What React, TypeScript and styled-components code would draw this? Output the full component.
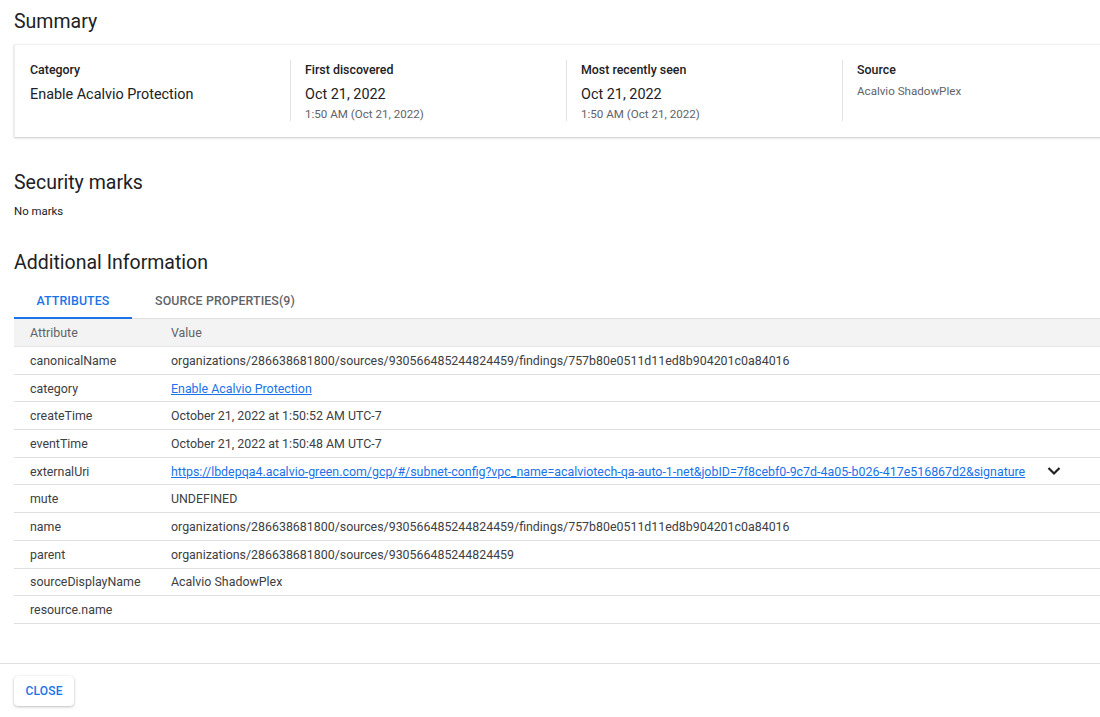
import React from "react";
import styled, { createGlobalStyle } from "styled-components";

const GlobalStyle = createGlobalStyle`
  html, body { margin: 0; padding: 0; background: #ffffff; }
  body { font-family: Roboto, "Liberation Sans", Arial, sans-serif; color: #202124; }
  * { box-sizing: border-box; }
`;

const Page = styled.div`
  width: 1100px;
  height: 717px;
  overflow: hidden;
  display: flex;
  flex-direction: column;
`;

const Content = styled.div`
  padding: 10px 0 0 14px;
  display: flex;
  flex-direction: column;
`;

const SectionTitle = styled.h2<{ $mt?: number }>`
  margin: ${(p) => p.$mt ?? 0}px 0 0;
  font-size: 19.5px;
  line-height: 24px;
  font-weight: 400;
  color: #202124;
`;

const Card = styled.div`
  margin-top: 10px;
  width: 1110px;
  display: flex;
  padding: 15px 0 16px;
  background: #fff;
  border-left: 1px solid #ececec;
  border-top: 1px solid #f2f2f2;
  box-shadow: 0 1px 2px rgba(0, 0, 0, 0.22);
`;

const Col = styled.div<{ $first?: boolean }>`
  width: ${(p) => (p.$first ? 275 : 276)}px;
  flex: none;
  padding: 2px 16px 0 ${(p) => (p.$first ? 15 : 14)}px;
  border-left: ${(p) => (p.$first ? "none" : "1px solid #e3e3e3")};
  height: 61px;
`;

const Label = styled.div`
  font-size: 12.4px;
  line-height: 16px;
  font-weight: 500;
  color: #202124;
`;

const BigValue = styled.div`
  margin-top: 7px;
  font-size: 14.4px;
  line-height: 20px;
  color: #202124;
`;

const SmallValue = styled.div<{ $mt?: number }>`
  margin-top: ${(p) => p.$mt ?? 2}px;
  font-size: 11.6px;
  line-height: 14px;
  color: #5f6368;
`;

const Note = styled.div`
  margin-top: 9px;
  font-size: 11.4px;
  line-height: 14px;
  color: #202124;
`;

const TabBar = styled.div`
  margin-top: 8px;
  display: flex;
  height: 36px;
  border-bottom: 1px solid #e0e0e0;
`;

const Tab = styled.div<{ $active?: boolean; $w: number }>`
  width: ${(p) => p.$w}px;
  display: flex;
  align-items: center;
  justify-content: center;
  font-size: 12.4px;
  font-weight: 500;
  letter-spacing: 0.1px;
  color: ${(p) => (p.$active ? "#1a73e8" : "#5f6368")};
  border-bottom: 2px solid ${(p) => (p.$active ? "#1a73e8" : "transparent")};
  margin-bottom: -1px;
`;

const Table = styled.div`
  display: flex;
  flex-direction: column;
`;

const HeadRow = styled.div`
  display: flex;
  align-items: center;
  height: 28px;
  background: #f3f3f3;
  border-bottom: 1px solid #e6e6e6;
  font-size: 12.4px;
  color: #5f6368;
`;

const Row = styled.div`
  display: flex;
  align-items: center;
  height: 27.7px;
  border-bottom: 1px solid #e0e0e0;
  font-size: 12.4px;
  color: #3c4043;
`;

const AttrCell = styled.div`
  width: 157px;
  flex: none;
  padding-left: 16px;
  white-space: nowrap;
`;

const ValueCell = styled.div`
  flex: 1;
  display: flex;
  align-items: center;
  white-space: nowrap;
  overflow: hidden;
`;

const Link = styled.a`
  color: #1a73e8;
  text-decoration: underline;
  cursor: pointer;
`;

const Chevron = styled.span`
  display: inline-flex;
  margin-left: 22px;
  color: #202124;
`;

const Footer = styled.div`
  margin-top: 39px;
  border-top: 1px solid #e0e0e0;
  padding: 12px 0 0 14px;
`;

const CloseButton = styled.button`
  width: 60px;
  height: 30px;
  border: none;
  border-radius: 4px;
  background: #fff;
  box-shadow: 0 1px 3px rgba(0, 0, 0, 0.25), 0 0 1px rgba(0, 0, 0, 0.08);
  color: #1a73e8;
  font-family: Roboto, "Liberation Sans", Arial, sans-serif;
  font-size: 12px;
  font-weight: 500;
  letter-spacing: 0.2px;
  padding: 0;
`;

type Attr = { k: string; v: string; link?: boolean; expand?: boolean };

const attrs: Attr[] = [
  { k: "canonicalName", v: "organizations/286638681800/sources/930566485244824459/findings/757b80e0511d11ed8b904201c0a84016" },
  { k: "category", v: "Enable Acalvio Protection", link: true },
  { k: "createTime", v: "October 21, 2022 at 1:50:52 AM UTC-7" },
  { k: "eventTime", v: "October 21, 2022 at 1:50:48 AM UTC-7" },
  {
    k: "externalUri",
    v: "https://lbdepqa4.acalvio-green.com/gcp/#/subnet-config?vpc_name=acalviotech-qa-auto-1-net&jobID=7f8cebf0-9c7d-4a05-b026-417e516867d2&signature",
    link: true,
    expand: true,
  },
  { k: "mute", v: "UNDEFINED" },
  { k: "name", v: "organizations/286638681800/sources/930566485244824459/findings/757b80e0511d11ed8b904201c0a84016" },
  { k: "parent", v: "organizations/286638681800/sources/930566485244824459" },
  { k: "sourceDisplayName", v: "Acalvio ShadowPlex" },
  { k: "resource.name", v: "" },
];

export default function App() {
  return (
    <>
      <GlobalStyle />
      <Page>
        <Content>
          <SectionTitle>Summary</SectionTitle>
          <Card>
            <Col $first>
              <Label>Category</Label>
              <BigValue>Enable Acalvio Protection</BigValue>
            </Col>
            <Col>
              <Label>First discovered</Label>
              <BigValue>Oct 21, 2022</BigValue>
              <SmallValue>1:50 AM (Oct 21, 2022)</SmallValue>
            </Col>
            <Col>
              <Label>Most recently seen</Label>
              <BigValue>Oct 21, 2022</BigValue>
              <SmallValue>1:50 AM (Oct 21, 2022)</SmallValue>
            </Col>
            <Col>
              <Label>Source</Label>
              <SmallValue $mt={6}>Acalvio ShadowPlex</SmallValue>
            </Col>
          </Card>

          <SectionTitle $mt={34}>Security marks</SectionTitle>
          <Note>No marks</Note>

          <SectionTitle $mt={33}>Additional Information</SectionTitle>
          <TabBar>
            <Tab $active $w={118}>ATTRIBUTES</Tab>
            <Tab $w={186}>SOURCE PROPERTIES(9)</Tab>
          </TabBar>
          <Table>
            <HeadRow>
              <AttrCell>Attribute</AttrCell>
              <ValueCell>Value</ValueCell>
            </HeadRow>
            {attrs.map((a) => (
              <Row key={a.k}>
                <AttrCell>{a.k}</AttrCell>
                <ValueCell>
                  {a.link ? <Link>{a.v}</Link> : a.v}
                  {a.expand && (
                    <Chevron>
                      <svg width="14" height="10" viewBox="0 0 14 10">
                        <polyline points="1.5,2 7,7.5 12.5,2" fill="none" stroke="#202124" strokeWidth="2.2" />
                      </svg>
                    </Chevron>
                  )}
                </ValueCell>
              </Row>
            ))}
          </Table>
        </Content>
        <Footer>
          <CloseButton>CLOSE</CloseButton>
        </Footer>
      </Page>
    </>
  );
}
